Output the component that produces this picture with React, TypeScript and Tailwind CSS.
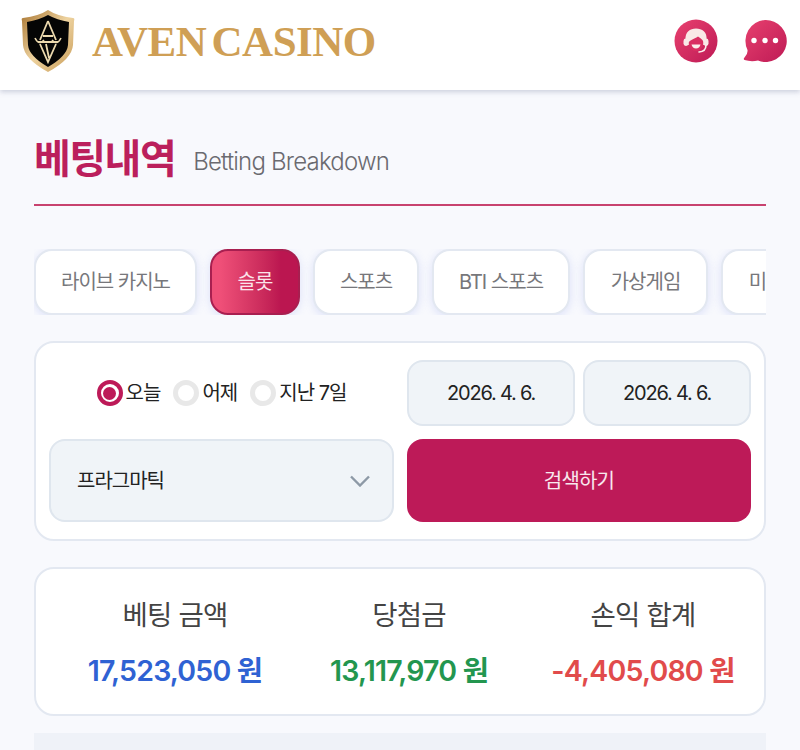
import React from "react";

const sans = { fontFamily: "Inter, 'Noto Sans CJK KR', sans-serif" };

function Logo() {
  return (
    <svg width="54" height="64" viewBox="0 0 54 64" className="shrink-0">
      <defs>
        <linearGradient id="g" x1="0" y1="0" x2="1" y2="1">
          <stop offset="0" stopColor="#a8742f" />
          <stop offset="0.5" stopColor="#eed3a0" />
          <stop offset="1" stopColor="#c79a55" />
        </linearGradient>
      </defs>
      <path d="M27 1 Q36 7 52 9 Q54 9 53 12 L52 36 Q51 50 27 63 Q3 50 2 36 L1 12 Q0 9 2 9 Q18 7 27 1Z" fill="url(#g)" />
      <path d="M27 6 Q36 11 48 13 L47 36 Q46 47 27 58 Q8 47 7 36 L6 13 Q18 11 27 6Z" fill="#050505" />
      <path d="M27 12 L19 31 M27 12 L35 31 M22 27 H32 M17 33 H37 M19 35 L27 53 L35 35 M25 35 L28 49" stroke="#ecd9ae" strokeWidth="1.8" fill="none" />
      <path d="M14 29 Q18 37 23 31 M40 29 Q36 37 31 31" stroke="#ecd9ae" strokeWidth="1.6" fill="none" />
    </svg>
  );
}

function Agent() {
  return (
    <svg width="44" height="44" viewBox="0 0 44 44">
      <defs>
        <linearGradient id="r1" x1="0" y1="0" x2="1" y2="1">
          <stop offset="0" stopColor="#e8416f" />
          <stop offset="1" stopColor="#be1a55" />
        </linearGradient>
      </defs>
      <circle cx="22" cy="22" r="21.5" fill="url(#r1)" />
      <path d="M11.5 21 C11 13 16 9.5 22 9.5 C28 9.5 33.5 13 32.5 21 L32.5 26 L11.5 26Z" fill="#f9e9e7" />
      <path d="M14.5 24 C15 21 20 20.5 24 17.5 C27 19.5 29.5 21 29.5 24 C29 29 26 32 22 32 C18 32 15 29 14.5 24Z" fill="#d92f62" />
      <path d="M17.5 25.5 H26.5 Q25.5 29.5 22 29.5 Q18.5 29.5 17.5 25.5Z" fill="#fbeeec" />
      <rect x="9.5" y="19.5" width="5" height="7.5" rx="2.4" fill="#f9e9e7" />
      <rect x="29.5" y="19.5" width="5" height="7.5" rx="2.4" fill="#f9e9e7" />
      <path d="M32 26 Q32 32.5 25 33" stroke="#fbeeec" strokeWidth="1.6" fill="none" strokeLinecap="round" />
    </svg>
  );
}

function Chat() {
  return (
    <svg width="44" height="44" viewBox="0 0 44 44">
      <defs>
        <linearGradient id="r2" x1="0" y1="0" x2="1" y2="1">
          <stop offset="0" stopColor="#e8416f" />
          <stop offset="1" stopColor="#be1a55" />
        </linearGradient>
      </defs>
      <path d="M22 1 A21 21 0 1 1 15 41.5 Q8 43 1.5 41 Q0 40 1.5 38.5 Q5 35 4.5 31 A21 21 0 0 1 22 1Z" fill="url(#r2)" />
      <circle cx="11" cy="21.5" r="2.7" fill="#fff" />
      <circle cx="22" cy="21.5" r="2.7" fill="#fff" />
      <circle cx="32.5" cy="21.5" r="2.7" fill="#fff" />
    </svg>
  );
}

const tabs = [
  { label: "라이브 카지노", w: "w-[163px]" },
  { label: "슬롯", w: "w-[90px]" },
  { label: "스포츠", w: "w-[106px]" },
  { label: "BTI 스포츠", w: "w-[138px]" },
  { label: "가상게임", w: "w-[125px]" },
  { label: "미니게임", w: "w-[125px]" },
];

function Tab({ label, w, active }: { label: string; w: string; active: boolean }) {
  return (
    <div
      className={
        active
          ? `${w} h-[66px] shrink-0 flex items-center justify-center rounded-[18px] border-2 border-[#a81f50] bg-gradient-to-r from-[#ef4f78] from-10% to-[#bb1650] to-80% text-[#fbe4ea] text-[20px] tracking-[-1px] shadow-[0_2px_10px_rgba(110,130,230,0.2)]`
          : `${w} h-[66px] shrink-0 flex items-center justify-center rounded-[18px] border-2 border-[#e3e8f1] bg-white text-[#77777b] text-[20px] tracking-[-1px] shadow-[0_2px_10px_rgba(110,130,230,0.2)]`
      }
    >
      {label}
    </div>
  );
}

function Radio({ label, on }: { label: string; on?: boolean }) {
  return (
    <div className="flex items-center gap-[3px]">
      <span
        className={
          on
            ? "w-[26px] h-[26px] rounded-full border-[4px] border-[#bd1a58] bg-white flex items-center justify-center"
            : "w-[26px] h-[26px] rounded-full border-[5px] border-[#e8e8e8] bg-white"
        }
      >
        {on && <span className="w-[13px] h-[13px] rounded-full bg-[#bd1a58]" />}
      </span>
      <span className="text-[20px] tracking-[-1px] text-[#222]">{label}</span>
    </div>
  );
}

function DateBox({ v }: { v: string }) {
  return (
    <div className="flex-1 h-[66px] rounded-[16px] border-2 border-[#dfe6ee] bg-[#f0f4f8] flex items-center justify-center text-[20px] tracking-[-1.2px] text-[#222]">
      {v}
    </div>
  );
}

function Stat({ title, value, color }: { title: string; value: string; color: string }) {
  return (
    <div className="w-[234px] shrink-0 flex flex-col items-center gap-[22px]">
      <div className="text-[27.5px] leading-[34px] tracking-[-0.8px] text-[#444]">{title}</div>
      <div className={`text-[28.5px] leading-[34px] font-semibold tracking-[-0.8px] whitespace-nowrap ${color}`}>{value}</div>
    </div>
  );
}

export default function App() {
  return (
    <div className="w-[800px] h-[750px] overflow-hidden bg-[#f8f9fd]" style={sans}>
      <header className="h-[90px] bg-white shadow-[0_2px_5px_rgba(120,130,160,0.35)] flex items-center pl-[21px] pr-[13px] pb-[8px]">
        <Logo />
        <div
          className="ml-[17px] text-[43px] leading-none font-bold text-[#cf9f55] tracking-[-0.5px] [word-spacing:-5px] whitespace-nowrap"
          style={{ fontFamily: "'Liberation Serif', serif" }}
        >
          AVEN CASINO
        </div>
        <div className="ml-auto flex items-center gap-[25px]">
          <Agent />
          <Chat />
        </div>
      </header>

      <main className="px-[34px]">
        <div className="h-[116px] border-b-2 border-[#c8436f] flex items-end pb-[20px] gap-[18px]">
          <h1 className="text-[40px] leading-[50px] font-bold tracking-[-1.5px] text-[#bb1f5c]">베팅내역</h1>
          <span className="text-[24px] leading-[36px] font-light tracking-[-0.8px] text-[#6a6a70] mb-[4px]">Betting Breakdown</span>
        </div>

        <div className="mt-[43px] flex gap-[13px] overflow-hidden">
          {tabs.map((t) => (
            <Tab key={t.label} label={t.label} w={t.w} active={t.label === "슬롯"} />
          ))}
        </div>

        <section className="mt-[26px] h-[200px] rounded-[20px] border-2 border-[#e3e8f1] bg-white px-[13px] pt-[17px] flex flex-col gap-[13px]">
          <div className="flex gap-[13px]">
            <div className="w-[345px] flex items-center justify-center gap-[13px]">
              <Radio label="오늘" on />
              <Radio label="어제" />
              <Radio label="지난 7일" />
            </div>
            <div className="flex-1 flex gap-[8px]">
              <DateBox v="2026. 4. 6." />
              <DateBox v="2026. 4. 6." />
            </div>
          </div>
          <div className="flex gap-[13px]">
            <div className="w-[345px] h-[83px] rounded-[16px] border-2 border-[#dfe6ee] bg-[#f0f4f8] flex items-center justify-between pl-[26px] pr-[22px] text-[20px] tracking-[-1px] text-[#222]">
              프라그마틱
              <svg width="20" height="12" viewBox="0 0 20 12" fill="none" stroke="#8d99a6" strokeWidth="2.4">
                <path d="M1 1.5 L10 10.5 L19 1.5" />
              </svg>
            </div>
            <div className="flex-1 h-[83px] rounded-[16px] bg-[#bd1a58] flex items-center justify-center text-white/90 text-[20px] tracking-[-0.8px]">
              검색하기
            </div>
          </div>
        </section>

        <section className="mt-[26px] h-[149px] rounded-[20px] border-2 border-[#e3e8f1] bg-white flex items-center pl-[22px] pt-[2px]">
          <Stat title="베팅 금액" value="17,523,050 원" color="text-[#2f62d3]" />
          <Stat title="당첨금" value="13,117,970 원" color="text-[#23964f]" />
          <Stat title="손익 합계" value="-4,405,080 원" color="text-[#e14b4b]" />
        </section>

        <div className="mt-[17px] h-[40px] bg-[#eff2f8]" />
      </main>
    </div>
  );
}
